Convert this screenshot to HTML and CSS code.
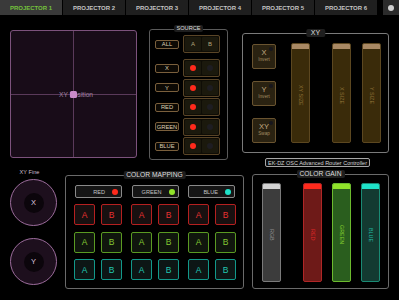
FILE: index.html
```html
<!DOCTYPE html>
<html>
<head>
<meta charset="utf-8">
<title>EK-DZ OSC Advanced Router Controller</title>
<link rel="stylesheet" href="styles.css">
</head>
<body>
<div class="tabs">
  <div class="tab active">PROJECTOR 1</div>
  <div class="tab">PROJECTOR 2</div>
  <div class="tab">PROJECTOR 3</div>
  <div class="tab">PROJECTOR 4</div>
  <div class="tab">PROJECTOR 5</div>
  <div class="tab">PROJECTOR 6</div>
  <div class="tab-dot"><span></span></div>
</div>

<div class="top">
  <div class="pad">
    <div class="pad-label">XY Position</div>
    <div class="pad-knob"></div>
  </div>

  <section class="panel source">
    <div class="ptitle">SOURCE</div>
    <div class="srow first">
      <div class="slabel">ALL</div>
      <div class="sgroup"><div class="scell">A</div><div class="scell">B</div></div>
    </div>
    <div class="srows">
      <div class="srow"><div class="slabel">X</div><div class="sgroup"><div class="scell"><i class="dot on"></i></div><div class="scell"><i class="dot"></i></div></div></div>
      <div class="srow"><div class="slabel">Y</div><div class="sgroup"><div class="scell"><i class="dot on"></i></div><div class="scell"><i class="dot"></i></div></div></div>
      <div class="srow"><div class="slabel">RED</div><div class="sgroup"><div class="scell"><i class="dot on"></i></div><div class="scell"><i class="dot"></i></div></div></div>
      <div class="srow"><div class="slabel">GREEN</div><div class="sgroup"><div class="scell"><i class="dot on"></i></div><div class="scell"><i class="dot"></i></div></div></div>
      <div class="srow"><div class="slabel">BLUE</div><div class="sgroup"><div class="scell"><i class="dot on"></i></div><div class="scell"><i class="dot"></i></div></div></div>
    </div>
  </section>

  <div class="xycol">
    <section class="panel xy">
      <div class="ptitle big">XY</div>
      <div class="xybtns">
        <div class="xybtn"><b>X</b><small>Invert</small></div>
        <div class="xybtn"><b>Y</b><small>Invert</small></div>
        <div class="xybtn"><b>XY</b><small>Swap</small></div>
      </div>
      <div class="fader f1"><div class="fcap"></div><div class="fbody"><span>XY SIZE</span></div></div>
      <div class="fader f2"><div class="fcap"></div><div class="fbody"><span>X SIZE</span></div></div>
      <div class="fader f3"><div class="fcap"></div><div class="fbody"><span>Y SIZE</span></div></div>
    </section>
    <div class="ek">EK-DZ OSC Advanced Router Controller</div>
  </div>
</div>

<div class="bottom">
  <div class="fine">
    <div class="fine-label">XY Fine</div>
    <div class="knob"><div class="knob-in">X</div></div>
    <div class="knob second"><div class="knob-in">Y</div></div>
  </div>

  <section class="panel cmap">
    <div class="ptitle">COLOR MAPPING</div>
    <div class="clabels">
      <div class="clabel">RED<i class="cdot red"></i></div>
      <div class="clabel">GREEN<i class="cdot green"></i></div>
      <div class="clabel">BLUE<i class="cdot blue"></i></div>
    </div>
    <div class="cgrid">
      <div class="cb r">A</div><div class="cb r">B</div><div class="cb r">A</div><div class="cb r">B</div><div class="cb r">A</div><div class="cb r">B</div>
      <div class="cb g">A</div><div class="cb g">B</div><div class="cb g">A</div><div class="cb g">B</div><div class="cb g">A</div><div class="cb g">B</div>
      <div class="cb c">A</div><div class="cb c">B</div><div class="cb c">A</div><div class="cb c">B</div><div class="cb c">A</div><div class="cb c">B</div>
    </div>
  </section>

  <section class="panel cgain">
    <div class="ptitle">COLOR GAIN</div>
    <div class="gfader rgb"><div class="fcap"></div><div class="fbody"><span>RGB</span></div></div>
    <div class="gfader red"><div class="fcap"></div><div class="fbody"><span>RED</span></div></div>
    <div class="gfader green"><div class="fcap"></div><div class="fbody"><span>GREEN</span></div></div>
    <div class="gfader blue"><div class="fcap"></div><div class="fbody"><span>BLUE</span></div></div>
  </section>
</div>
</body>
</html>
```
FILE: styles.css
```css
* { box-sizing: border-box; margin: 0; padding: 0; }
html, body { width: 399px; height: 300px; overflow: hidden; background: #000; }
body { font-family: "Liberation Sans", Arial, sans-serif; color: #ccc; }
i { display: block; font-style: normal; }

/* tabs */
.tabs { display: flex; height: 15px; gap: 1px; }
.tab {
  width: 62px; background: #1f1f1f; color: #c4c4c4;
  font-size: 6px; font-weight: bold;
  display: flex; align-items: center; justify-content: center;
}
.tab.active { background: #3a3a3a; color: #74c23c; }
.tab-dot {
  margin-left: 5px; flex: 1; background: #2b2b2b;
  display: flex; align-items: center; justify-content: center;
}
.tab-dot span { width: 6px; height: 6px; border-radius: 50%; background: #cfcfcf; }

/* top row */
.top { display: flex; align-items: flex-start; height: 152px; }

.pad {
  margin: 15px 0 0 10px; width: 127px; height: 128px;
  border: 1px solid #7c527c; border-radius: 3px;
  background:
    linear-gradient(#5a3a5a, #5a3a5a) center / 1px 100% no-repeat,
    linear-gradient(#5a3a5a, #5a3a5a) center / 100% 1px no-repeat,
    #180c18;
  display: grid; place-items: center;
}
.pad-label, .pad-knob { grid-area: 1 / 1; }
.pad-label { font-size: 6.6px; color: #a283a2; margin-left: 5px; }
.pad-knob { width: 7px; height: 7px; border-radius: 1.5px; background: #c98ac9; }

.panel { position: relative; border: 1px solid #606060; border-radius: 3px; }
.ptitle {
  position: absolute; left: 50%; top: -5px; transform: translateX(-50%);
  height: 8px; line-height: 8px; padding: 0 3px; border-radius: 2px;
  background: #1e1e1e; color: #dedede; font-size: 6.7px; white-space: nowrap;
}
.ptitle.big { font-size: 7px; padding: 0 5px; }

/* source */
.source { margin: 14px 0 0 12px; width: 79px; height: 131px; padding: 5px 0 0 5px; border-color: #5a5a5a; }
.source .ptitle { font-size: 5.6px; padding: 0 3px; height: 7px; line-height: 7px; top: -5px; }
.srow { display: flex; align-items: center; height: 18px; }
.srow.first { margin-bottom: 6px; }
.srows { display: flex; flex-direction: column; gap: 1.5px; }
.slabel {
  width: 24px; height: 9px; border: 1px solid #7a5f3c; border-radius: 2px;
  background: #0c0904; color: #dcceb2; font-size: 5.8px;
  display: flex; align-items: center; justify-content: center;
}
.sgroup {
  margin-left: 4px; width: 37px; height: 18px;
  border: 1px solid #5a4527; border-radius: 2px; background: #0f0d06;
  padding: 1px; display: flex; gap: 1px;
}
.scell {
  flex: 1; background: #1b190d; border-radius: 1px;
  display: flex; align-items: center; justify-content: center;
  font-size: 6px; color: #b5a57f;
}
.dot { width: 6px; height: 6px; border-radius: 50%; background: #1e1d22; }
.dot.on { background: #ff2a1c; }

/* XY */
.xycol { margin-left: 14px; width: 147px; }
.xy {
  margin-top: 18px; height: 120px; padding: 9px 0 0 9px;
  display: flex; align-items: flex-start; border-color: #7a7a7a;
}
.xybtns { display: flex; flex-direction: column; gap: 12px; margin-top: 1px; }
.xybtn {
  position: relative; width: 24px; height: 25px;
  border: 1px solid #6a5430; border-radius: 2px; background: #2a2211;
  display: flex; flex-direction: column; align-items: center; justify-content: center;
  color: #c4ab82; padding-bottom: 1px;
}
.xybtn::after {
  content: ""; position: absolute; top: 2px; right: 2px;
  width: 4px; height: 4px; border-radius: 50%; background: #17161d;
}
.xybtn b { font-weight: normal; font-size: 7.5px; line-height: 8px; }
.xybtn small { font-size: 4.6px; line-height: 6px; color: #a48d62; }

.fader {
  width: 19px; height: 100px; border: 1px solid #5c4720; border-radius: 2px;
  background: #3a2b0a; display: flex; flex-direction: column; overflow: hidden;
}
.fader .fcap { background: #a98964; }
.fcap { height: 5px; flex: none; }
.fbody { flex: 1; display: flex; align-items: center; justify-content: center; }
.fbody span { writing-mode: vertical-rl; font-size: 5.4px; white-space: nowrap; }
.fader .fbody span { color: #8e7136; }
.f1 { margin-left: 15px; }
.f2 { margin-left: 22px; }
.f3 { margin-left: 11px; }

.ek {
  margin: 5px 0 0 23px; width: 105px; height: 9px;
  border: 1px solid #a6a6a6; border-radius: 2px; background: #0b0b0b;
  color: #d2d2d2; font-size: 5.5px; white-space: nowrap;
  display: flex; align-items: center; justify-content: center;
}

/* bottom row */
.bottom { display: flex; align-items: flex-start; }
.fine { margin-left: 10px; width: 47px; display: flex; flex-direction: column; align-items: center; }
.fine-label { height: 10px; line-height: 10px; font-size: 5.6px; color: #cbbccb; padding-right: 8px; white-space: nowrap; }
.knob {
  margin-top: 2px; width: 47px; height: 47px; border-radius: 50%;
  border: 1px solid #9c6c9c; background: #1d0f1d;
  display: flex; align-items: center; justify-content: center;
}
.knob.second { margin-top: 12px; }
.knob-in {
  width: 20px; height: 20px; border-radius: 50%; background: #0b050b;
  display: flex; align-items: center; justify-content: center;
  font-size: 7.5px; color: #dcc4dc;
}

.cmap { margin: 8px 0 0 8px; width: 179px; height: 114px; padding-top: 9px; border-color: #6a6a6a; }
.clabels { display: flex; gap: 9.5px; padding-left: 9px; }
.clabel {
  width: 47px; height: 13px; border: 1px solid #8a8a8a; border-radius: 2px; background: #151515;
  display: flex; align-items: center; justify-content: flex-end; gap: 7px; padding-right: 3px;
  font-size: 5.6px; color: #c2c2c2;
}
.cdot { width: 6px; height: 6px; border-radius: 50%; }
.cdot.red { background: #ff2a1c; }
.cdot.green { background: #90e22a; }
.cdot.blue { background: #1ee2c8; }

.cgrid {
  display: grid; grid-template-columns: 21px 21px 24px 21px 24px 21px;
  column-gap: 6px; row-gap: 6.5px; margin-top: 6px; padding-left: 8px; justify-items: end;
}
.cb {
  width: 21px; height: 21px; border: 1px solid; border-radius: 2px;
  display: flex; align-items: center; justify-content: center; font-size: 8.5px;
}
.cb.r { border-color: #b52020; color: #e83030; background: #181010; }
.cb.g { border-color: #5a9a22; color: #84c832; background: #10160d; }
.cb.c { border-color: #12988a; color: #22c6b2; background: #0d1615; }

.cgain {
  margin: 7px 0 0 8px; width: 137px; height: 115px; padding: 8px 0 0 9px;
  display: flex; align-items: flex-start; border-color: #6a6a6a;
}
.gfader {
  width: 19px; height: 99px; border: 1px solid; border-radius: 2px;
  display: flex; flex-direction: column; overflow: hidden;
}
.gfader.rgb { border-color: #7a7a7a; background: #3c3c3c; }
.gfader.rgb .fcap { background: #d2d2d2; }
.gfader.rgb span { color: #8e8e8e; }
.gfader.red { margin-left: 22px; border-color: #b02626; background: #6e1a18; }
.gfader.red .fcap { background: #ff2a1c; }
.gfader.red span { color: #e02828; }
.gfader.green { margin-left: 10px; border-color: #6cba2e; background: #2a5e1e; }
.gfader.green .fcap { background: #90e22a; }
.gfader.green span { color: #86d02e; }
.gfader.blue { margin-left: 10px; border-color: #1a8a74; background: #133a31; }
.gfader.blue .fcap { background: #1ee2c8; }
.gfader.blue span { color: #22b8a2; }
```
